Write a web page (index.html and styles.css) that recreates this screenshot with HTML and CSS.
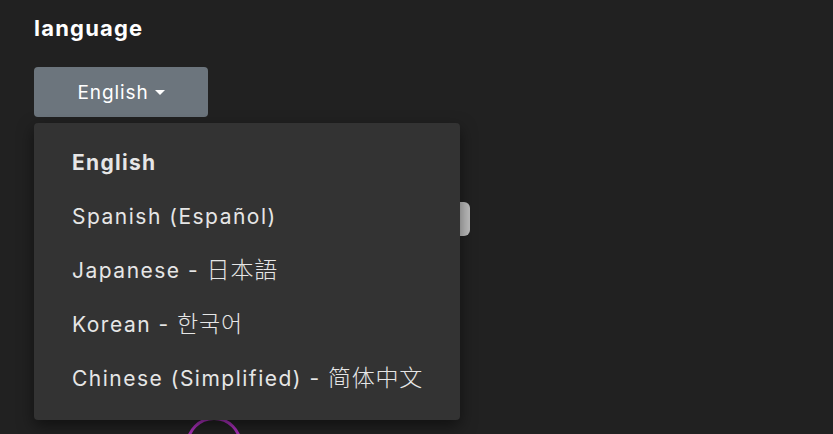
FILE: index.html
```html
<!DOCTYPE html>
<html lang="en">
<head>
    <meta charset="UTF-8">
    <meta name="viewport" content="width=device-width, initial-scale=1.0">
    <title>Settings - Language</title>
    <link rel="stylesheet" href="styles.css">
</head>
<body>
    <div class="settings">
        <h2 class="section-title">language</h2>
        <div class="dropdown">
            <button class="dropdown-toggle">English <span class="caret"></span></button>
            <ul class="dropdown-menu">
                <li class="active">English</li>
                <li>Spanish (Español)</li>
                <li>Japanese - <span class="cjk">日本語</span></li>
                <li>Korean - <span class="cjk">한국어</span></li>
                <li>Chinese (Simplified) - <span class="cjk">简体中文</span></li>
            </ul>
        </div>
        <div class="toggle"></div>
        <div class="ring"></div>
    </div>
</body>
</html>
```

FILE: styles.css
```css
body {
    margin: 0;
    background-color: #212121;
    font-family: "Inter", "Noto Sans CJK SC", sans-serif;
    color: #fff;
    overflow: hidden;
}
.settings {
    position: relative;
    padding: 14px 34px;
    height: 406px;
}
.section-title {
    margin: 0;
    font-size: 22px;
    font-weight: 700;
    line-height: 28px;
    letter-spacing: 1.2px;
}
.dropdown {
    position: relative;
    margin-top: 25px;
    z-index: 2;
}
.dropdown-toggle {
    width: 174px;
    height: 50px;
    background: #6c757d;
    color: #fff;
    border: none;
    border-radius: 4px;
    font-family: inherit;
    font-size: 19px;
    letter-spacing: 0.9px;
    cursor: pointer;
    display: flex;
    align-items: center;
    justify-content: center;
    gap: 6px;
}
.caret {
    width: 0;
    height: 0;
    border-left: 5px solid transparent;
    border-right: 5px solid transparent;
    border-top: 5px solid #fff;
}
.dropdown-menu {
    position: absolute;
    top: 56px;
    left: 0;
    width: 426px;
    margin: 0;
    padding: 12px 0 15px;
    list-style: none;
    background: #333;
    border-radius: 4px;
    box-shadow: 0 6px 16px rgba(0, 0, 0, 0.5);
}
.dropdown-menu li {
    padding: 0 20px 0 38px;
    height: 54px;
    line-height: 56px;
    font-size: 21px;
    letter-spacing: 1.5px;
    white-space: nowrap;
    color: #e6e6e6;
}
.dropdown-menu li.active {
    font-weight: 700;
    letter-spacing: 1.3px;
}
.cjk {
    font-size: 23px;
    line-height: 1;
    letter-spacing: 0.8px;
    font-weight: 300;
}
.toggle {
    position: absolute;
    left: 436px;
    top: 202px;
    width: 34px;
    height: 34px;
    background: #bdbdbd;
    border-radius: 6px;
    z-index: 1;
}
.ring {
    position: absolute;
    left: 186px;
    top: 417px;
    width: 50px;
    height: 50px;
    border: 3px solid #a72fb8;
    border-radius: 50%;
    z-index: 1;
}
```
